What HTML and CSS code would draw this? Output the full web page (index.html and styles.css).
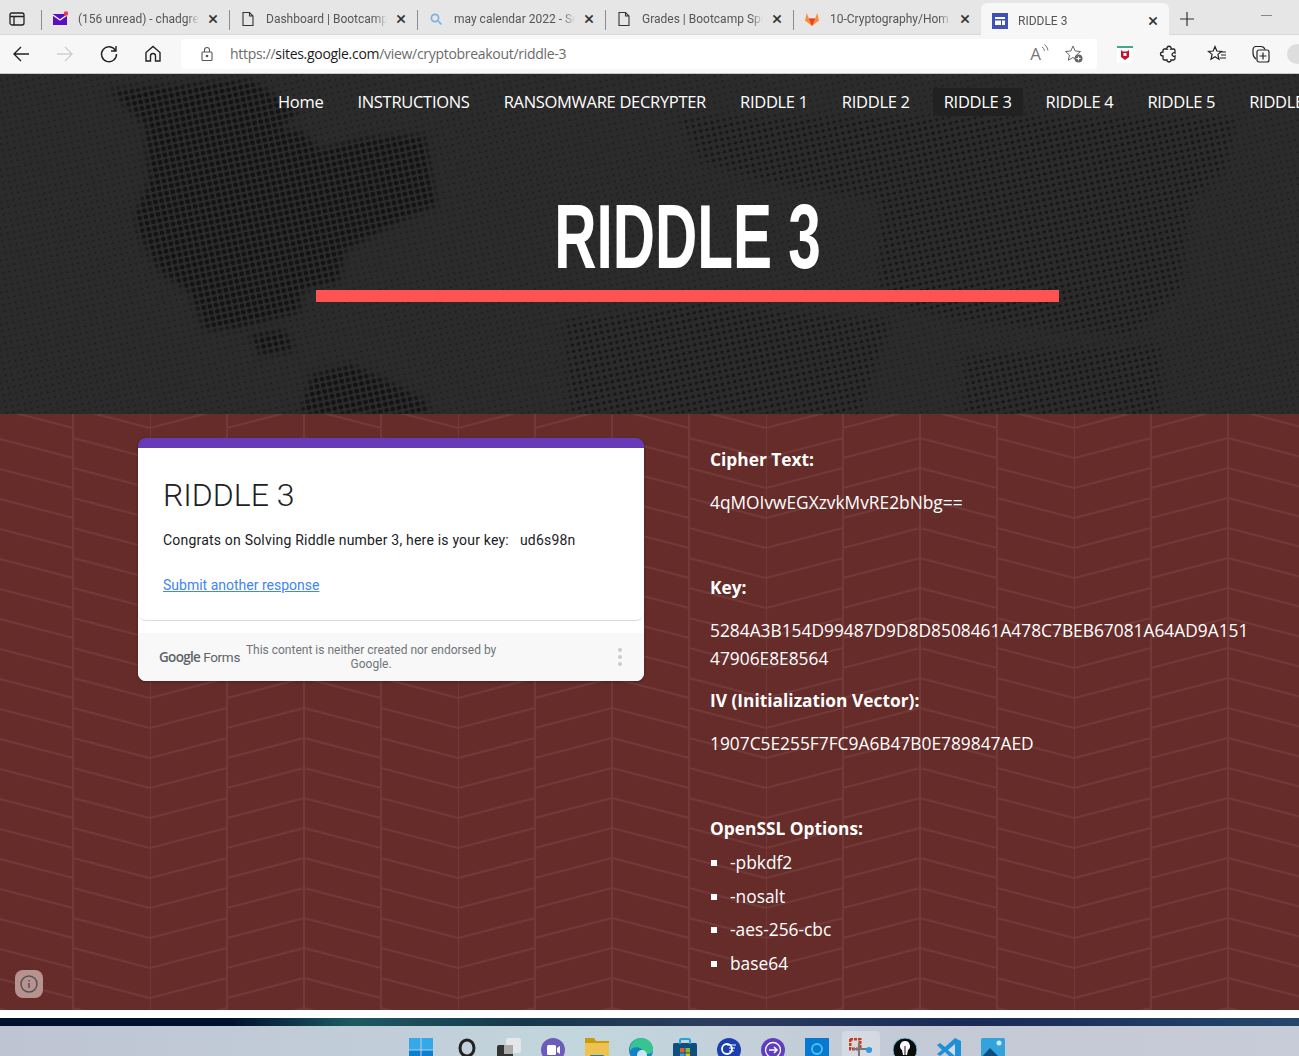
FILE: index.html
```html
<!DOCTYPE html>
<html lang="en">
<head>
  <meta charset="UTF-8">
  <title>RIDDLE 3</title>
  <link rel="stylesheet" href="styles.css">
</head>
<body>
  <!-- browser tabs -->
  <div class="tabbar">
    <div class="tab-actions">
      <svg width="18" height="18" viewBox="0 0 18 18" fill="none" stroke="#222" stroke-width="1.3"><rect x="2" y="3" width="14" height="12" rx="2"/><path d="M2 6.500h14M6 6.500V15"/></svg>
    </div>
    <div class="tab">
      <svg class="tab-icon" viewBox="0 0 16 16"><rect x="1" y="3" width="14" height="11" fill="#5b0fbe"/><path d="M1 4l7 5 7-5" fill="none" stroke="#fff" stroke-width="1.400"/><circle cx="14" cy="2.500" r="2.200" fill="#f0384a"/></svg>
      <span class="tab-title">(156 unread) - chadgre</span>
      <span class="tab-close">×</span>
    </div>
    <div class="tab">
      <svg class="tab-icon" viewBox="0 0 16 16" fill="none" stroke="#333" stroke-width="1.100"><path d="M3 1.500h6.500L13 5v9.500H3zM9.500 1.500V5H13"/></svg>
      <span class="tab-title">Dashboard | Bootcamp</span>
      <span class="tab-close">×</span>
    </div>
    <div class="tab">
      <svg class="tab-icon" viewBox="0 0 16 16" fill="none" stroke="#7fb0dc" stroke-width="1.700"><circle cx="7" cy="7" r="3.600"/><path d="M10 10l3.400 3.400"/></svg>
      <span class="tab-title">may calendar 2022 - Se</span>
      <span class="tab-close">×</span>
    </div>
    <div class="tab">
      <svg class="tab-icon" viewBox="0 0 16 16" fill="none" stroke="#333" stroke-width="1.100"><path d="M3 1.500h6.500L13 5v9.500H3zM9.500 1.500V5H13"/></svg>
      <span class="tab-title">Grades | Bootcamp Spc</span>
      <span class="tab-close">×</span>
    </div>
    <div class="tab">
      <svg class="tab-icon" viewBox="0 0 16 16"><path d="M8 15L1 9.500 2.800 2l2 5.500h6.400L13.200 2 15 9.500z" fill="#fc8a3a"/><path d="M8 15L4.800 7.500h6.400z" fill="#e24329"/></svg>
      <span class="tab-title">10-Cryptography/Hom</span>
      <span class="tab-close">×</span>
    </div>
    <div class="tab tab-active">
      <svg class="tab-icon" viewBox="0 0 16 16"><rect width="16" height="16" fill="#3f51b5"/><path d="M3 4h10v2H3zM3 7.500h6V12H3zM10 7.500h3V12h-3z" fill="#fff"/></svg>
      <span class="tab-title">RIDDLE 3</span>
      <span class="tab-close">×</span>
    </div>
    <svg class="new-tab" width="18" height="18" viewBox="0 0 18 18" stroke="#333" stroke-width="1.200"><path d="M9 2v14M2 9h14"/></svg>
    <span class="minimize"></span>
  </div>

  <!-- browser toolbar -->
  <div class="toolbar">
    <svg class="tool tool-back" viewBox="0 0 20 20" fill="none" stroke="#222" stroke-width="1.400"><path d="M18 10H3M10 3l-7 7 7 7"/></svg>
    <svg class="tool tool-forward" viewBox="0 0 20 20" fill="none" stroke="#cfcfcf" stroke-width="1.400"><path d="M2 10h15M10 3l7 7-7 7"/></svg>
    <svg class="tool tool-reload" viewBox="0 0 20 20" fill="none" stroke="#222" stroke-width="1.400"><path d="M16.500 6.500A7.500 7.500 0 1 0 17.500 10M17 2v5h-5"/></svg>
    <svg class="tool tool-home" viewBox="0 0 20 20" fill="none" stroke="#222" stroke-width="1.400"><path d="M3 17V8.500L10 2.500l7 6V17h-4.500v-5a2.500 2.500 0 0 0-5 0v5z"/></svg>
    <div class="address">
      <svg class="lock" width="16" height="16" viewBox="0 0 16 16" fill="none" stroke="#555" stroke-width="1.100"><rect x="3" y="6" width="10" height="8.500" rx="1"/><path d="M5.500 6V4a2.500 2.500 0 0 1 5 0v2"/><circle cx="8" cy="10" r=".8" fill="#555"/></svg>
      <span class="url">https://<b>sites.google.com</b>/view/cryptobreakout/riddle-3</span>
      <span class="read-aloud">A<svg width="8" height="10" viewBox="0 0 8 10" fill="none" stroke="#777"><path d="M1 3q2 1 2.500 4M3.500 .5q3 2 3.500 6"/></svg></span>
      <svg class="fav-add" width="20" height="20" viewBox="0 0 20 20"><path d="M9 2l2.200 5 5.300.5-4 3.500 1.200 5.200L9 13.500 4.300 16.200 5.500 11l-4-3.500L6.800 7z" fill="none" stroke="#666" stroke-width="1"/><circle cx="14.500" cy="14.500" r="4" fill="#666"/><path d="M14.500 12.500v4M12.500 14.500h4" stroke="#fff"/></svg>
    </div>
    <svg class="ext ext-shield" viewBox="0 0 20 20"><rect x="2" y="4" width="16" height="15" fill="#fff"/><rect x="2" y="2" width="16" height="2" fill="#3ea98d"/><path d="M6 6l2 1.500h4L14 6v7l-4 3-4-3z" fill="#c8102e"/><path d="M8.500 9h3v3h-3z" fill="#fff"/></svg>
    <svg class="ext ext-puzzle" viewBox="0 0 20 20" fill="none" stroke="#222" stroke-width="1.300"><path d="M8 3.500q2-2.500 4 0 .5 1 0 1.500h2.500q1.500 0 1.500 1.500V9q-1-.8-2 0-2 1.500 0 3 1 .8 2 0v2.500q0 1.500-1.500 1.500H12q.5 1.500-2 2-2.500-.5-2-2H5.500Q4 16 4 14.500V12q-2.500 0-2.500-2T4 8V6.500Q4 5 5.500 5H8q-.5-.5 0-1.500z"/></svg>
    <span class="tool-sep"></span>
    <svg class="ext ext-favs" viewBox="0 0 20 20" fill="none" stroke="#222" stroke-width="1.200"><path d="M8 2.500l1.800 4.500 4.700.4-3.600 3 1.100 4.800L8 12.800l-4 2.400L5.100 10.400 1.500 7.400l4.700-.4zM14 8h5M14 11h5M13 14h6"/></svg>
    <svg class="ext ext-coll" viewBox="0 0 20 20" fill="none" stroke="#222" stroke-width="1.200"><path d="M5 15Q2 13 2 9V5.500a3 3 0 0 1 3-3h5q3 0 4 3"/><rect x="6" y="6" width="12" height="12" rx="2"/><path d="M12 8.500v7M8.500 12h7"/></svg>
    <span class="profile"></span>
  </div>

  <!-- hero -->
  <header class="hero">
    <svg class="hero-bg" width="1299" height="340" viewBox="0 74 1299 340">
      <defs>
        <pattern id="dots-small" width="6.300" height="6.300" patternUnits="userSpaceOnUse" patternTransform="rotate(-12)">
          <circle cx="3" cy="3" r="1" fill="#1b1b1b"/>
        </pattern>
        <pattern id="dots-mid" width="6.300" height="6.300" patternUnits="userSpaceOnUse" patternTransform="rotate(-12)">
          <circle cx="3" cy="3" r="1.700" fill="#171717"/>
        </pattern>
        <pattern id="dots-big" width="6.300" height="6.300" patternUnits="userSpaceOnUse" patternTransform="rotate(-12)">
          <circle cx="3" cy="3" r="2.300" fill="#131313"/>
        </pattern>
        <filter id="soften" x="-20%" y="-20%" width="140%" height="140%">
          <feGaussianBlur stdDeviation="3"/>
        </filter>
        <mask id="blobs-left" maskUnits="userSpaceOnUse" x="0" y="74" width="1299" height="340">
          <g fill="#fff" filter="url(#soften)">
            <path d="M145 130L300 130 320 150 365 138 425 135 432 180 436 205 392 225 345 250 338 282 302 290 300 312 240 328 205 330 190 292 160 272 138 232 135 215 150 180z"/>
            <path d="M250 335L285 330 295 350 260 355z"/>
            <path d="M300 414L312 375 350 365 385 380 425 400 430 414z"/>
            <path d="M110 90L250 80 300 110 280 130 150 130z"/>
          </g>
        </mask>
        <mask id="blobs-right" maskUnits="userSpaceOnUse" x="0" y="74" width="1299" height="340">
          <g fill="#fff" filter="url(#soften)">
            <path d="M680 118L1235 118 1225 170 1190 200 1180 290 1130 335 960 320 880 300 880 200 760 180 700 160z"/>
            <path d="M566 320L700 305 890 320 860 414 570 414z"/>
            <path d="M965 355L1160 345 1160 414 965 414z"/>
          </g>
        </mask>
      </defs>
      <rect y="74" width="1299" height="340" fill="#2b2b2b"/>
      <rect y="74" width="1299" height="340" fill="url(#dots-small)"/>
      <rect y="74" width="1299" height="340" fill="url(#dots-big)" mask="url(#blobs-left)"/>
      <rect y="74" width="1299" height="340" fill="url(#dots-mid)" mask="url(#blobs-right)"/>
    </svg>
    <nav class="site-nav">
      <a class="nav-first">Home</a>
      <a>INSTRUCTIONS</a>
      <a>RANSOMWARE DECRYPTER</a>
      <a>RIDDLE 1</a>
      <a>RIDDLE 2</a>
      <a class="nav-current">RIDDLE 3</a>
      <a>RIDDLE 4</a>
      <a>RIDDLE 5</a>
      <a>RIDDLE 6</a>
    </nav>
    <div class="hero-title">
      <h1>RIDDLE 3</h1>
      <div class="hero-bar"></div>
    </div>
  </header>

  <!-- page content -->
  <main class="content">
    <svg class="content-bg" width="1299" height="596">
      <defs>
        <pattern id="chevrons" x="150" y="4" width="308" height="60" patternUnits="userSpaceOnUse">
          <path d="M0 0V60M77 0V60M154 0V60M231 0V60" stroke="#733938" stroke-width="2" fill="none"/>
          <path d="M0 10L77 -10M0 40L77 20M0 70L77 50M77 10L154 -10M77 40L154 20M77 70L154 50M154 -10L231 10M154 20L231 40M154 50L231 70M231 -10L308 10M231 20L308 40M231 50L308 70" stroke="#733938" stroke-width="2" fill="none"/>
        </pattern>
      </defs>
      <rect width="1299" height="596" fill="url(#chevrons)"/>
    </svg>

    <section class="form-card">
      <div class="form-main">
        <h2>RIDDLE 3</h2>
        <p class="form-msg">Congrats on Solving Riddle number 3, here is your key:&nbsp;&nbsp; ud6s98n</p>
        <a class="form-link">Submit another response</a>
      </div>
      <div class="form-footer">
        <span class="form-brand"><b>Google</b> Forms</span>
        <span class="form-note">This content is neither created nor endorsed by Google.</span>
        <span class="form-dots"><i></i><i></i><i></i></span>
      </div>
    </section>

    <section class="info">
      <p><b>Cipher Text:</b></p>
      <p>4qMOIvwEGXzvkMvRE2bNbg==</p>
      <p class="blank"></p>
      <p><b>Key:</b></p>
      <p class="key">5284A3B154D99487D9D8D8508461A478C7BEB67081A64AD9A15147906E8E8564</p>
      <p><b>IV (Initialization Vector):</b></p>
      <p>1907C5E255F7FC9A6B47B0E789847AED</p>
      <p class="blank"></p>
      <p class="list-head"><b>OpenSSL Options:</b></p>
      <ul>
        <li>-pbkdf2</li>
        <li>-nosalt</li>
        <li>-aes-256-cbc</li>
        <li>base64</li>
      </ul>
    </section>

    <div class="info-btn">
      <svg width="20" height="20" viewBox="0 0 20 20" fill="none" stroke="#4e5558" stroke-width="1.500"><circle cx="10" cy="10" r="8"/><path d="M10 9v5M10 6v1.500"/></svg>
    </div>
  </main>

  <div class="page-end"></div>
  <div class="wallpaper"></div>

  <!-- windows taskbar, icons are cut off by the window edge -->
  <div class="taskbar">
    <div class="task"><svg viewBox="0 0 24 24"><path d="M0 0h11.500v11.500H0zM12.500 0H24v11.500H12.500z" fill="#35a9e8"/><path d="M0 12.500h11.500V24H0zM12.500 12.500H24V24H12.500z" fill="#0b7fd6"/></svg></div>
    <div class="task"><svg viewBox="0 0 24 24" fill="none" stroke="#222" stroke-width="3"><ellipse cx="14" cy="10" rx="7" ry="8"/></svg></div>
    <div class="task"><svg viewBox="0 0 24 24"><rect x="9" y="0" width="15" height="15" rx="2" fill="#e4e6ea"/><rect x="0" y="7" width="16" height="17" rx="2" fill="#333"/><rect x="7" y="7" width="9" height="9" fill="#aaa"/></svg></div>
    <div class="task"><svg viewBox="0 0 24 24"><circle cx="12" cy="12" r="12" fill="#6a5cb8"/><rect x="6" y="7" width="9" height="10" rx="1.500" fill="#fff"/><path d="M16 10l3-2v8l-3-2z" fill="#fff"/></svg></div>
    <div class="task"><svg viewBox="0 0 24 24"><path d="M0 0h9l2 3h13v21H0z" fill="#c99a10"/><rect y="5" width="24" height="19" fill="#edc24f"/><rect x="5" y="17" width="14" height="7" rx="1" fill="#1180c9"/></svg></div>
    <div class="task"><svg viewBox="0 0 24 24"><circle cx="12" cy="12" r="12" fill="#1480c6"/><path d="M12 0a12 12 0 0 1 12 12c0 3-3 4-6 4-4 0-3-4-7-6C6 8 3 10 1 13 0 6 6 0 12 0z" fill="#37c58f"/><circle cx="13" cy="17" r="5" fill="#cde6ee"/></svg></div>
    <div class="task"><svg viewBox="0 0 24 24"><rect y="5" width="24" height="19" rx="1.500" fill="#0f4f80"/><path d="M7 6V2.500q0-1.500 1.500-1.500h7Q17 1 17 2.500V6" fill="none" stroke="#27a2d9" stroke-width="2"/><path d="M7 10h4.500v4.500H7z" fill="#e8572b"/><path d="M12.500 10H17v4.500h-4.500z" fill="#7ebc3a"/><path d="M7 15.500h4.500V20H7z" fill="#2aa4e2"/><path d="M12.500 15.500H17V20h-4.500z" fill="#f5b90f"/></svg></div>
    <div class="task"><svg viewBox="0 0 24 24"><circle cx="12" cy="12" r="12" fill="#1b3fae"/><circle cx="10" cy="11" r="5" fill="none" stroke="#fff" stroke-width="1.800"/><path d="M10 7h9M12 10h6M12 13h5" stroke="#fff"/></svg></div>
    <div class="task"><svg viewBox="0 0 24 24"><circle cx="12" cy="12" r="12" fill="#5f3fc0"/><circle cx="12" cy="12" r="7.500" fill="none" stroke="#fff" stroke-width="1.300"/><path d="M8 12h8M13 9l3 3-3 3" fill="none" stroke="#fff" stroke-width="1.500"/></svg></div>
    <div class="task"><svg viewBox="0 0 24 24"><rect width="24" height="24" fill="#0a78d0"/><circle cx="12" cy="11" r="5" fill="none" stroke="#43c7f0" stroke-width="1.800"/></svg></div>
    <div class="task task-open"><svg viewBox="0 0 24 24"><path d="M1 1h10v10" fill="none" stroke="#c93a16" stroke-width="3" stroke-dasharray="3 1"/><path d="M1 1v10h10" fill="none" stroke="#c93a16" stroke-width="3" stroke-dasharray="3 1"/><path d="M10 5v19" stroke="#777" stroke-width="2"/><path d="M4 11h19" stroke="#777" stroke-width="2"/><circle cx="20" cy="12" r="3" fill="#2d9adf"/></svg></div>
    <div class="task"><svg viewBox="0 0 24 24"><circle cx="12" cy="12" r="12" fill="#0c0c0c" stroke="#6fbfe0"/><path d="M12 3a5 5 0 0 1 3 9l-1 5h-4l-1-5a5 5 0 0 1 3-9z" fill="#fff"/><path d="M12 8v9" stroke="#111"/></svg></div>
    <div class="task"><svg viewBox="0 0 24 24"><path d="M18 0l6 3v18l-6 3-10-10-5 4-3-2 5-4-5-5 3-2 5 4z" fill="#1f8fd8"/><path d="M18 6l-7 6 7 6z" fill="#cfdbe3"/></svg></div>
    <div class="task"><svg viewBox="0 0 24 24"><rect width="24" height="24" rx="1.500" fill="#34a3dc"/><circle cx="18" cy="5" r="2.500" fill="#cdeaf7"/><path d="M0 20l9-10 8 8 7 2v4H0z" fill="#0f4c80"/></svg></div>
  </div>
</body>
</html>
```

FILE: styles.css
```css
html, body {
  margin: 0;
  height: 1056px;
  overflow: hidden;
}

body {
  font-family: "Open Sans", sans-serif;
  background: #fff;
}

/* browser chrome */
.tabbar {
  display: flex;
  height: 35px;
  padding-left: 41px;
  box-sizing: border-box;
  background: #e6e6e6;
  border-bottom: 1px solid #d8d8d8;
  position: relative;
}

.tab-actions {
  position: absolute;
  left: 8px;
  top: 10px;
}

.tab {
  width: 188px;
  height: 34px;
  box-sizing: border-box;
  padding: 3px 10px 0 11px;
  display: flex;
  align-items: center;
  gap: 8px;
  position: relative;
  font-family: Roboto, sans-serif;
  font-size: 12px;
  color: #555;
}

.tab::before {
  content: "";
  position: absolute;
  left: 0;
  top: 10px;
  height: 20px;
  width: 1px;
  background: #8c8c8c;
}

.tab-active {
  background: #f7f7f7;
  height: 35px;
  margin-top: 3px;
  padding-top: 0;
  border-radius: 6px 6px 0 0;
}

.tab-active::before {
  display: none;
}

.tab-icon {
  width: 16px;
  height: 16px;
  margin-right: 2px;
  flex: none;
}

.tab-title {
  flex: 1;
  min-width: 0;
  overflow: hidden;
  white-space: nowrap;
  -webkit-mask-image: linear-gradient(to right, #000 90%, transparent);
  mask-image: linear-gradient(to right, #000 90%, transparent);
}

.tab-close {
  width: 12px;
  text-align: center;
  font-size: 19px;
  line-height: 16px;
  color: #333;
}

.new-tab {
  margin: 10px 0 0 9px;
}

.minimize {
  position: absolute;
  left: 1261px;
  top: 15px;
  width: 11px;
  height: 1px;
  background: #888;
}

.toolbar {
  height: 39px;
  box-sizing: border-box;
  background: #f7f7f7;
  border-bottom: 1px solid #c9c9c9;
  display: flex;
  align-items: center;
  position: relative;
}

.tool {
  width: 20px;
  height: 20px;
  flex: none;
}

.tool-back {
  margin-left: 11px;
}

.tool-forward {
  margin-left: 24px;
}

.tool-reload {
  margin-left: 24px;
}

.tool-home {
  margin-left: 24px;
}

.address {
  width: 916px;
  height: 30px;
  margin-left: 18px;
  background: #fff;
  border-radius: 4px;
  display: flex;
  align-items: center;
  padding-left: 18px;
  box-sizing: border-box;
  flex: none;
}

.url {
  margin: 0 0 2px 15px;
  font-family: "Open Sans", sans-serif;
  font-size: 14px;
  letter-spacing: -0.3px;
  color: #6b6b6b;
  flex: 1;
}

.url b {
  font-weight: 400;
  color: #1b1b1b;
}

.read-aloud {
  font-size: 17px;
  line-height: 20px;
  color: #777;
  display: flex;
  margin-right: 15px;
}

.fav-add {
  margin-right: 13px;
}

.ext {
  width: 20px;
  height: 20px;
  flex: none;
}

.ext-shield {
  margin-left: 18px;
}

.ext-puzzle {
  margin-left: 24px;
}

.tool-sep {
  width: 1px;
  height: 20px;
  background: #bbb;
  margin-left: 14px;
}

.ext-favs {
  margin-left: 14px;
}

.ext-coll {
  margin-left: 24px;
}

.profile {
  width: 20px;
  height: 20px;
  border-radius: 50%;
  background: #ddd;
  margin-left: 16px;
  flex: none;
}

/* hero */
.hero {
  height: 340px;
  position: relative;
  overflow: hidden;
  background: #2b2b2b;
}

.hero-bg {
  position: absolute;
  left: 0;
  top: 0;
}

.site-nav {
  position: relative;
  display: flex;
  gap: 12px;
  padding: 14px 0 0 267px;
  white-space: nowrap;
  font-size: 16.5px;
  letter-spacing: -0.3px;
}

.site-nav a {
  flex: none;
  padding: 0 11px;
  line-height: 28px;
  color: #fff;
}

.site-nav .nav-current {
  background: #212121;
}

.hero-title {
  position: relative;
  width: 743px;
  margin: 76px 0 0 316px;
  text-align: center;
}

/* no Oswald here, so Arial bold squeezed to the same width */
.hero-title h1 {
  margin: 0;
  font-family: "Liberation Sans", sans-serif;
  font-size: 90px;
  font-weight: 700;
  line-height: 90px;
  color: #fff;
  transform: scaleX(0.65);
}

.hero-bar {
  height: 12px;
  margin-top: 8px;
  background: #ff5252;
}

/* content */
.content {
  height: 596px;
  box-sizing: border-box;
  padding: 24px 0 0 138px;
  position: relative;
  overflow: hidden;
  background: #652c2a;
  display: grid;
  grid-template-columns: 506px 540px;
  column-gap: 66px;
  align-items: start;
}

.content-bg {
  position: absolute;
  left: 0;
  top: 0;
}

.form-card {
  position: relative;
  background: #fff;
  border-top: 10px solid #673ab7;
  border-radius: 8px;
  overflow: hidden;
  font-family: Roboto, sans-serif;
  box-shadow: 0 1px 3px rgba(0,0,0,0.3);
}

.form-main {
  height: 173px;
  box-sizing: border-box;
  padding: 27px 25px 0;
  border-bottom: 1px solid #dadce0;
  border-radius: 0 0 8px 8px;
}

.form-main h2 {
  margin: 0;
  font-size: 32px;
  font-weight: 300;
  line-height: 40px;
  color: #202124;
}

.form-msg {
  margin: 15px 0 0;
  font-size: 14px;
  line-height: 20px;
  letter-spacing: 0.2px;
  color: #202124;
}

.form-link {
  display: block;
  margin-top: 25px;
  font-size: 14px;
  line-height: 20px;
  color: #4285f4;
  text-decoration: underline;
}

.form-footer {
  height: 48px;
  margin-top: 12px;
  background: #f8f8f8;
  display: flex;
  align-items: center;
  padding: 0 22px 0 21px;
}

.form-brand {
  font-size: 13.5px;
  letter-spacing: -0.3px;
  color: #5f6368;
  white-space: nowrap;
}

.form-brand b {
  font-family: "Open Sans", sans-serif;
  font-weight: 600;
  letter-spacing: -0.7px;
}

.form-note {
  width: 252px;
  margin-left: 5px;
  text-align: center;
  font-size: 12px;
  line-height: 14px;
  color: #70757a;
}

.form-dots {
  margin-left: auto;
  display: flex;
  flex-direction: column;
  gap: 3px;
}

.form-dots i {
  width: 4px;
  height: 4px;
  border-radius: 50%;
  background: #ccc;
}

.info {
  position: relative;
  margin-top: 7px;
  font-size: 17.33px;
  line-height: 28px;
  color: #fff;
}

.info p {
  margin: 0 0 15px;
}

.info p.blank {
  height: 27px;
}

.info p.list-head {
  margin-bottom: 6px;
}

.info .key {
  word-break: break-all;
  margin-bottom: 14px;
}

.info ul {
  margin: 0;
  padding-left: 20px;
  list-style: square;
}

.info li {
  margin-bottom: 5.7px;
}

.info-btn {
  position: absolute;
  left: 15px;
  top: 556px;
  width: 28px;
  height: 28px;
  border-radius: 8px;
  background: #b8928f;
  display: flex;
  align-items: center;
  justify-content: center;
}

/* desktop */
.page-end {
  height: 8px;
  background: #fff;
}

.wallpaper {
  height: 8px;
  background: linear-gradient(to right, #00112f 18%, #1c5a63 27%, #16384a 40%, #2d3c5e 55%, #1b2a55 75%, #24476a 100%);
}

.taskbar {
  height: 30px;
  box-sizing: border-box;
  padding: 5px 0 0 399px;
  display: flex;
  overflow: hidden;
  background: linear-gradient(to right, #bfc4d2 0%, #c1ced9 30%, #c2d6dd 45%, #c4c9d6 70%, #c8ccd8 100%);
}

.task {
  width: 38px;
  height: 25px;
  margin: 0 3px;
  flex: none;
  box-sizing: border-box;
  padding-top: 7px;
  display: flex;
  justify-content: center;
  border-radius: 4px 4px 0 0;
}

.task svg {
  width: 24px;
  height: 24px;
  flex: none;
}

.task-open {
  background: #d5dae2;
}
```
